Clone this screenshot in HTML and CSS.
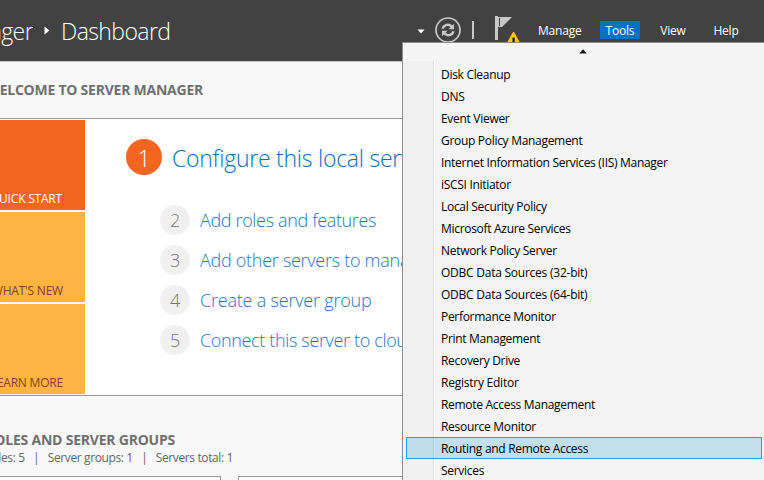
FILE: index.html
```html
<!DOCTYPE html>
<html lang="en">
<head>
<meta charset="utf-8">
<title>Dashboard</title>
<link rel="stylesheet" href="styles.css">
</head>
<body>
<div class="window">
  <header class="topbar">
    <div class="crumb crumb-root"><span>Manager</span></div>
    <svg class="crumb-arrow" width="6" height="9" viewBox="0 0 6 9"><path d="M0.5 0.5L5.5 4.5L0.5 8.5Z" fill="#fff"/></svg>
    <h1 class="crumb">Dashboard</h1>
    <div class="tools">
      <svg class="caret" width="8" height="5" viewBox="0 0 8 5"><path d="M0.5 0.5H7.5L4 4.5Z" fill="#fff"/></svg>
      <svg class="refresh" width="26" height="26" viewBox="0 0 26 26" fill="none" stroke="#c8c8c8">
        <circle cx="13" cy="13" r="12" stroke-width="1.7"/>
        <path d="M7.7 11.8C8.3 8.2 13 6.2 16.8 9.6M18.3 14.2C17.7 17.8 13 19.8 9.2 16.4" stroke-width="2.4"/>
        <path d="M19 6.8V12.3H13.5ZM7 19.2V13.7H12.5Z" fill="#c8c8c8" stroke="none"/>
      </svg>
      <span class="divider"></span>
      <svg class="flag" width="27" height="28" viewBox="0 0 27 28">
        <path d="M0 1H3V25H0Z" fill="#c8c8c8"/>
        <path d="M3 2H17L7 12H3Z" fill="#c8c8c8"/>
        <path d="M4.5 3V11" stroke="#424242"/>
        <path d="M18.5 18L24.5 29H12.5Z" fill="#ffc20e" stroke="#ffc20e" stroke-width="2" stroke-linejoin="round"/>
        <path d="M17.5 22.5H19.7V28H17.5Z" fill="#111"/>
      </svg>
    </div>
    <nav class="nav">
      <a class="nav-manage">Manage</a>
      <a class="nav-tools">Tools</a>
      <a class="nav-view">View</a>
      <a class="nav-help">Help</a>
    </nav>
  </header>

  <main>
    <div class="welcome-head"><h2><span>WELCOME TO SERVER MANAGER</span></h2></div>
    <section class="welcome">
      <div class="tiles">
        <div class="tile tile-active"><span>QUICK START</span></div>
        <div class="tile tile-new"><span>WHAT'S NEW</span></div>
        <div class="tile tile-learn"><span>LEARN MORE</span></div>
      </div>
      <div class="steps">
        <div class="step step-main"><b>1</b><a>Configure this local server</a></div>
        <div class="step"><b>2</b><a class="tight">Add roles and features</a></div>
        <div class="step"><b>3</b><a class="snug">Add other servers to manage</a></div>
        <div class="step"><b>4</b><a>Create a server group</a></div>
        <div class="step"><b>5</b><a class="tight">Connect this server to cloud services</a></div>
      </div>
    </section>
    <section class="groups">
      <h2><span>ROLES AND SERVER GROUPS</span></h2>
      <p><span>Roles: 5</span><i>|</i><span>Server groups: 1</span><i>|</i><span>Servers total: 1</span></p>
      <div class="cards"><div class="card card-first"></div><div class="card"></div></div>
    </section>
  </main>

  <div class="menu">
    <div class="scroll-up"><svg width="8" height="5" viewBox="0 0 8 5"><path d="M4 0.3L7.7 4.5H0.3Z" fill="#111"/></svg></div>
    <ul>
      <li>Disk Cleanup</li>
      <li>DNS</li>
      <li>Event Viewer</li>
      <li>Group Policy Management</li>
      <li>Internet Information Services (IIS) Manager</li>
      <li>iSCSI Initiator</li>
      <li>Local Security Policy</li>
      <li>Microsoft Azure Services</li>
      <li>Network Policy Server</li>
      <li class="wide">ODBC Data Sources (32-bit)</li>
      <li class="wide">ODBC Data Sources (64-bit)</li>
      <li>Performance Monitor</li>
      <li>Print Management</li>
      <li>Recovery Drive</li>
      <li class="wide">Registry Editor</li>
      <li>Remote Access Management</li>
      <li>Resource Monitor</li>
      <li class="selected">Routing and Remote Access</li>
      <li>Services</li>
    </ul>
  </div>
</div>
</body>
</html>
```

FILE: styles.css
```css
* { box-sizing: border-box; margin: 0; padding: 0; }
body { font-family: "Open Sans", "Noto Sans", sans-serif; font-size: 12px; overflow: hidden; }
.window { position: relative; width: 764px; height: 480px; overflow: hidden; background: #f8f8f8; }

.topbar { display: flex; height: 62px; background: #424242; border-bottom: 1px solid #c4c4c4; color: #fff; }
.crumb { font-size: 23px; font-weight: 300; line-height: 32px; padding-top: 15px; letter-spacing: -0.6px; white-space: nowrap; }
.crumb-root { width: 33px; display: flex; justify-content: flex-end; overflow: hidden; }
.crumb-arrow { margin: 26px 11px 0 11px; }
.tools { display: flex; width: 121px; margin-left: auto; }
.caret { margin-top: 29px; }
.refresh { margin: 17px 0 0 10px; }
.divider { width: 2px; height: 18px; background: #c8c8c8; margin: 21px 0 0 11px; }
.flag { margin: 15px 0 0 21px; }
.nav { display: flex; width: 226px; padding-top: 21px; }
.nav a { height: 18px; line-height: 20px; text-align: center; letter-spacing: -0.2px; }
.nav-manage { width: 43px; }
.nav .nav-tools { width: 40px; margin-left: 19px; background: #0072c6; }
.nav-view { width: 26px; margin-left: 20px; }
.nav-help { width: 26px; margin-left: 27px; }

h2 { color: #707070; font-size: 14px; font-weight: 700; line-height: 18px; white-space: nowrap; display: flex; justify-content: flex-end; }
.welcome-head { height: 56px; padding-top: 19px; }
.welcome-head h2 { width: 203px; letter-spacing: -0.24px; }
.welcome { display: flex; height: 278px; background: #fff; border: 1px solid #999; border-width: 1px 0; }
.tiles { width: 85px; padding-top: 1px; display: flex; flex-direction: column; gap: 2px; }
.tile { height: 90px; background: #ffb343; color: #7f4217; display: flex; justify-content: flex-end; align-items: flex-end; padding: 0 22px 3px 0; line-height: 17px; white-space: nowrap; overflow: hidden; letter-spacing: -0.2px; }
.tile-active { background: #f46522; color: #fff; padding-right: 23px; }
.steps { padding: 20px 0 0 41px; }
.step { display: flex; align-items: center; height: 40px; padding-left: 34px; color: #1b77c0; font-weight: 300; font-size: 18px; white-space: nowrap; letter-spacing: -0.2px; }
.step .tight { letter-spacing: -0.35px; }
.step .snug { letter-spacing: -0.28px; }
.step b { width: 30px; height: 30px; border-radius: 50%; background: #f0f0f0; color: #777; font-weight: 300; text-align: center; line-height: 30px; margin-right: 10px; }
.step-main { height: 36px; margin-bottom: 25px; padding-left: 0; font-size: 23px; color: #0072c6; letter-spacing: -0.25px; }
.step-main a { padding-top: 2px; }
.step-main b { width: 36px; height: 36px; line-height: 38px; background: #f46522; color: #fff; }

.groups { padding-top: 35px; }
.groups h2 { width: 175px; letter-spacing: -0.22px; }
.groups p { display: flex; width: 233px; justify-content: flex-end; line-height: 18px; color: #666; white-space: nowrap; letter-spacing: -0.38px; }
.groups i { font-style: normal; margin: 0 8.4px; }
.cards { display: grid; grid-template-columns: 221px 1fr; gap: 17px; margin-top: 9px; }
.card { height: 20px; background: #fff; border: 1px solid #999; }
.card-first { border-left: 0; }

.menu { position: absolute; left: 402px; top: 42px; width: 364px; height: 440px; background: #f4f4f4; border: 1px solid #8c8c8c; }
.scroll-up { height: 18px; padding: 6px 0 0 176px; line-height: 0; }
.menu ul { list-style: none; height: 420px; padding: 2px 0 0 3px; background: linear-gradient(to right, #f4f4f4 1px, #f0f0f0 1px, #f0f0f0 30px, #e1e1e1 30px, #e1e1e1 31px, #fff 31px, #fff 32px, #f4f4f4 32px); }
.menu li { width: 356px; height: 22px; border: 1px solid transparent; padding-left: 34px; line-height: 22px; color: #000; letter-spacing: -0.3px; white-space: nowrap; }
.menu .wide { letter-spacing: -0.24px; }
.menu .selected { background: rgba(38, 160, 218, 0.24); border-color: #26a0da; }
```
